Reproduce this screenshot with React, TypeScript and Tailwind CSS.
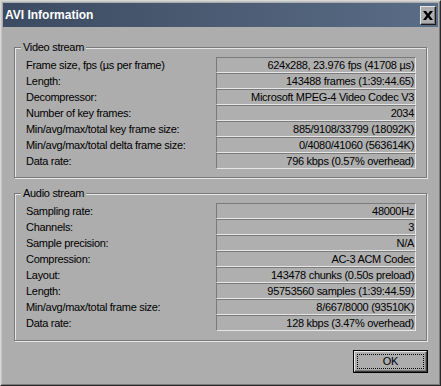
import React from "react";

const video: [string, string][] = [
  ["Frame size, fps (µs per frame)", "624x288, 23.976 fps (41708 µs)"],
  ["Length:", "143488 frames (1:39:44.65)"],
  ["Decompressor:", "Microsoft MPEG-4 Video Codec V3"],
  ["Number of key frames:", "2034"],
  ["Min/avg/max/total key frame size:", "885/9108/33799 (18092K)"],
  ["Min/avg/max/total delta frame size:", "0/4080/41060 (563614K)"],
  ["Data rate:", "796 kbps (0.57% overhead)"],
];

const audio: [string, string][] = [
  ["Sampling rate:", "48000Hz"],
  ["Channels:", "3"],
  ["Sample precision:", "N/A"],
  ["Compression:", "AC-3 ACM Codec"],
  ["Layout:", "143478 chunks (0.50s preload)"],
  ["Length:", "95753560 samples (1:39:44.59)"],
  ["Min/avg/max/total frame size:", "8/667/8000 (93510K)"],
  ["Data rate:", "128 kbps (3.47% overhead)"],
];

function Rows({ rows }: { rows: [string, string][] }) {
  return (
    <div className="flex flex-col">
      {rows.map(([l, v], i) => (
        <div key={i} className="flex h-[16px] items-center">
          <div className="flex-1 pl-[11px] leading-[16px] whitespace-nowrap">{l}</div>
          <div className="w-[200px] h-[16px] border border-t-[#7a7a7a] border-l-[#7a7a7a] border-r-[#e6e6e6] border-b-[#e6e6e6] bg-[#afafaf] text-right pr-[1px] leading-[14px] whitespace-nowrap overflow-hidden">
            {v}
          </div>
        </div>
      ))}
    </div>
  );
}

function Group({
  title,
  rows,
  className,
  pb,
}: {
  title: string;
  rows: [string, string][];
  className: string;
  pb: string;
}) {
  return (
    <div
      className={`relative ml-[11px] w-[413px] border border-[#7a7a7a] shadow-[inset_1px_1px_0_#e6e6e6,1px_1px_0_#e6e6e6] pt-[9px] pr-[10px] ${pb} ${className}`}
    >
      <span className="absolute left-[6px] top-[-8px] px-[2px] bg-[#adadad] leading-[14px]">
        {title}
      </span>
      <Rows rows={rows} />
    </div>
  );
}

export default function App() {
  return (
    <div
      className="w-[441px] h-[386px] bg-[#adadad] border border-t-[#d8d8d8] border-l-[#d8d8d8] border-r-[#2a2a2a] border-b-[#2a2a2a] text-black text-[11px] tracking-[-0.3px]"
      style={{ fontFamily: '"Liberation Sans", Arial, sans-serif' }}
    >
      <div className="h-full border border-t-[#c4c4c4] border-l-[#c4c4c4] border-r-[#7a7a7a] border-b-[#7a7a7a] p-[1px] flex flex-col">
        <div className="h-[24px] flex items-center bg-gradient-to-r from-[#3c4b61] to-[#5a6d86] pl-[2px]">
          <span className="flex-1 text-white font-bold text-[12px] tracking-normal">
            AVI Information
          </span>
          <div className="mr-[2px] w-[16px] h-[19px] bg-[#adadad] border border-t-[#e6e6e6] border-l-[#e6e6e6] border-r-[#1a1a1a] border-b-[#1a1a1a] shadow-[inset_-1px_-1px_0_#7a7a7a] flex items-center justify-center">
            <svg width="10" height="9" viewBox="0 0 10 9">
              <path d="M0 0h3l2 2.8L7 0h3L6.6 4.5 10 9H7L5 6.2 3 9H0l3.4-4.5z" fill="#000" />
            </svg>
          </div>
        </div>
        <Group title="Video stream" rows={video} className="mt-[20px]" pb="pb-[8px]" />
        <Group title="Audio stream" rows={audio} className="mt-[15px]" pb="pb-[9px]" />
        <div className="self-end mr-[10px] mt-[9px] w-[75px] h-[23px] border border-black">
          <div className="w-full h-full border border-t-[#e6e6e6] border-l-[#e6e6e6] border-r-[#3a3a3a] border-b-[#3a3a3a] shadow-[inset_-1px_-1px_0_#7a7a7a] p-[2px]">
            <div className="w-full h-full border border-dotted border-black flex items-center justify-center leading-none">
              OK
            </div>
          </div>
        </div>
      </div>
    </div>
  );
}
